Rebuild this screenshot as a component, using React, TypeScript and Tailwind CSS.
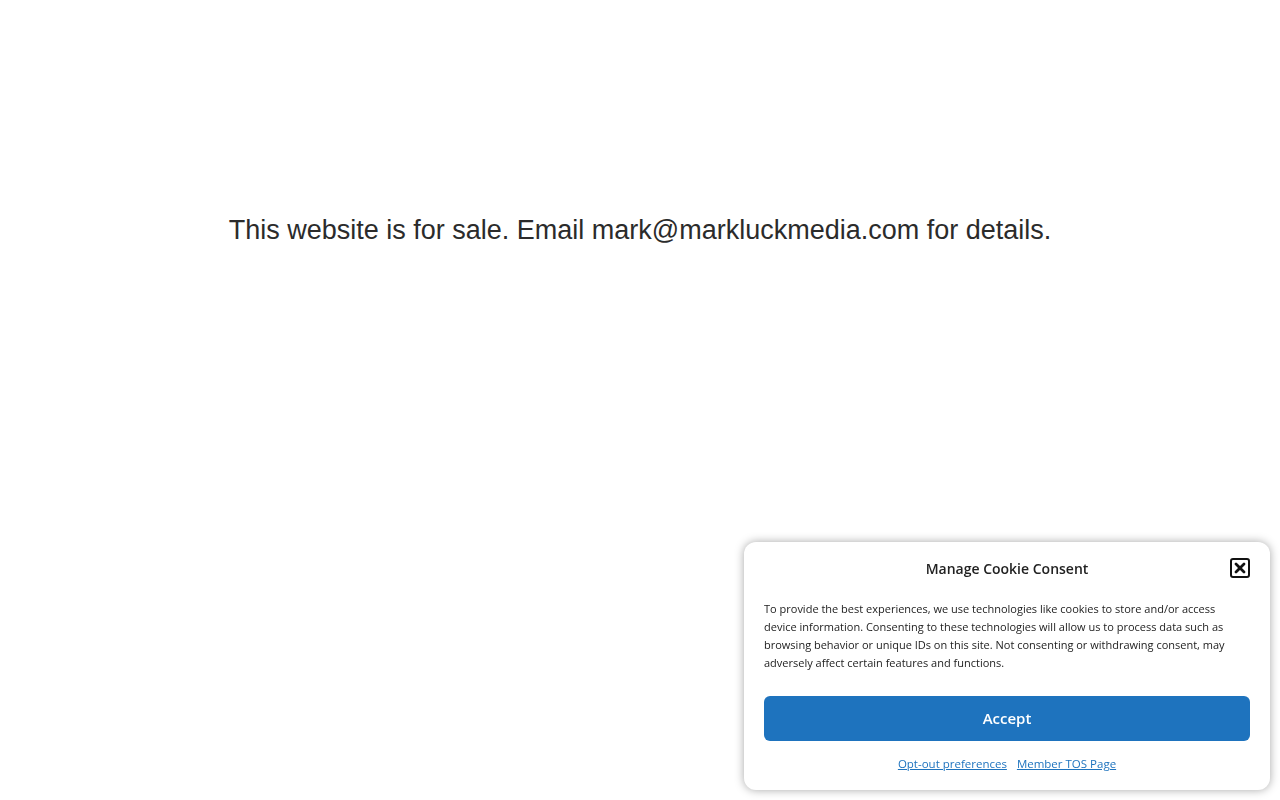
import { X } from 'lucide-react'

function CookieBanner() {
    return (
        <div className="fixed right-[10px] bottom-[10px] w-[526px] bg-white rounded-xl shadow-[0_0_10px_rgba(0,0,0,0.35)] px-5 pt-4 pb-[17px] font-['Open_Sans',sans-serif] text-[#222]">
            <div className="relative flex items-center justify-center h-5">
                <span className="text-[14px] font-semibold text-[#222]">
                    Manage Cookie Consent
                </span>
                <button
                    type="button"
                    className="absolute right-0 top-0 w-5 h-5 border-2 border-[#111] rounded-[3px] flex items-center justify-center"
                >
                    <X className="w-4 h-4 text-[#111]" strokeWidth={4} />
                </button>
            </div>
            <p className="mt-[22px] text-[11px] leading-[18px] text-[#222]">
                To provide the best experiences, we use technologies like cookies
                to store and/or access device information. Consenting to these
                technologies will allow us to process data such as browsing
                behavior or unique IDs on this site. Not consenting or withdrawing
                consent, may adversely affect certain features and functions.
            </p>
            <button
                type="button"
                className="mt-[24px] w-full h-[45px] rounded-md bg-[#1e73be] text-white text-[15px] font-semibold"
            >
                Accept
            </button>
            <div className="mt-[14px] flex justify-center gap-[10px] text-[11.5px] leading-[18px] text-[#1e73be]">
                <a className="underline cursor-pointer">Opt-out preferences</a>
                <a className="underline cursor-pointer">Member TOS Page</a>
            </div>
        </div>
    )
}

export default function App() {
    return (
        <div className="min-h-screen bg-white">
            <div className="pt-[211px] text-center font-['Liberation_Sans',Arial,sans-serif] text-[27px] leading-[38px] text-[#2b2b2b]">
                This website is for sale. Email mark@markluckmedia.com for
                details.
            </div>
            <CookieBanner />
        </div>
    )
}
